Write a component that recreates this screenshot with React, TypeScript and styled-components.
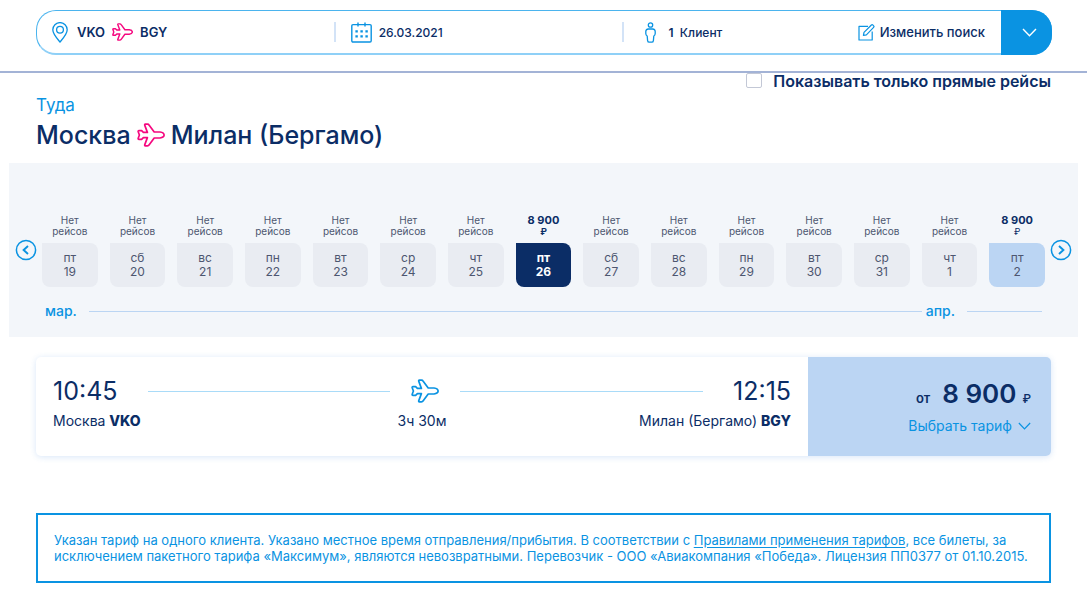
import React from "react";
import styled, { createGlobalStyle, css } from "styled-components";

const color = {
  navy: "#0b2d66",
  blue: "#0a93e2",
  sky: "#8fd0f7",
  leg: "#a9dbf8",
  pale: "#bbd5f3",
  pink: "#f5087f",
  grey: "#4d5670",
  strip: "#f3f6fa",
  cell: "#e9ecf2",
};

const GlobalStyle = createGlobalStyle`
  *, *::before, *::after { box-sizing: border-box; }
  body {
    margin: 0;
    background: #fff;
    color: ${color.navy};
    font-family: Inter, "Noto Sans", sans-serif;
    font-size: 14px;
  }
  button { font: inherit; color: inherit; background: none; border: 0; padding: 0; cursor: pointer; }
  svg { display: block; flex: none; }
  h1, p { margin: 0; }
`;

const Header = styled.header`
  padding: 10px 35px 16px 36px;
  border-bottom: 2px solid #a3b3d6;
`;

const SearchBar = styled.div`
  display: flex;
  height: 45px;
  border: 1px solid #4bb4ee;
  border-bottom: 2px solid ${color.sky};
  border-radius: 20px;
`;

const Fields = styled.div`
  flex: 1;
  display: grid;
  grid-template-columns: 299fr 289fr 214fr 163fr;
  align-items: center;
`;

const Field = styled.div<{ $divided?: boolean; $gap?: number; $inset?: number; $small?: boolean }>`
  display: flex;
  align-items: center;
  gap: ${(p) => p.$gap ?? 7}px;
  height: 20px;
  padding-left: ${(p) => p.$inset ?? 15}px;
  font-size: ${(p) => (p.$small ? 12 : 13)}px;
  font-weight: 500;
  white-space: nowrap;
  ${(p) => p.$divided && css`border-right: 2px solid #d3e3f7;`}
`;

const Code = styled.span`
  font-weight: 600;
`;

const EditButton = styled.button`
  display: flex;
  align-items: center;
  justify-content: flex-end;
  gap: 5px;
  padding-right: 16px;
  font-size: 13px;
  font-weight: 500;
  white-space: nowrap;
`;

const ExpandButton = styled.button`
  display: flex;
  align-items: center;
  justify-content: center;
  width: 51px;
  margin: -1px -1px -2px 0;
  padding-left: 6px;
  border-radius: 0 20px 20px 0;
  background: ${color.blue};
  color: #fff;
`;

const Heading = styled.section`
  display: flex;
  justify-content: space-between;
  align-items: flex-start;
  padding: 0 36px 12px;
`;

const Direction = styled.p`
  padding-top: 21px;
  font-size: 17px;
  line-height: 22px;
  color: ${color.blue};
`;

const Route = styled.h1`
  display: flex;
  align-items: center;
  gap: 6px;
  margin-top: 3px;
  font-size: 25px;
  line-height: 32px;
  font-weight: 500;
`;

const DirectOnly = styled.label`
  display: flex;
  align-items: flex-start;
  gap: 11px;
  font-size: 16px;
  line-height: 17px;
  font-weight: 600;
`;

const Checkbox = styled.input`
  appearance: none;
  width: 16px;
  height: 15px;
  margin: 0;
  border: 1px solid #c3c8d6;
  border-radius: 2px;
  background: #fff;
  &:checked { background: ${color.blue}; }
`;

const Strip = styled.section`
  margin: 0 9px;
  padding: 52px 6px 16px;
  background: ${color.strip};
`;

const DaysRow = styled.div`
  display: flex;
  align-items: flex-end;
  gap: 5px;
`;

const RoundButton = styled.button`
  display: flex;
  align-items: center;
  justify-content: center;
  width: 22px;
  height: 22px;
  margin-bottom: 26px;
  color: ${color.blue};
`;

const Days = styled.div`
  flex: 1;
  display: grid;
  grid-template-columns: repeat(15, 1fr);
  gap: 12px;
`;

type Tone = "none" | "active" | "offer";

const Day = styled.button`
  display: flex;
  flex-direction: column;
  align-items: center;
`;

const Fare = styled.span<{ $tone: Tone }>`
  display: flex;
  flex-direction: column;
  align-items: center;
  height: 28px;
  font-size: 10px;
  line-height: 11px;
  white-space: nowrap;
  color: ${(p) => (p.$tone === "none" ? color.grey : color.navy)};
  font-weight: ${(p) => (p.$tone === "active" ? 700 : 400)};
`;

const Amount = styled.b`
  font-size: 11px;
  font-weight: 700;
`;

const Ruble = styled.span`
  font-size: 9px;
`;

const DateCell = styled.span<{ $tone: Tone }>`
  display: flex;
  flex-direction: column;
  align-items: center;
  justify-content: center;
  width: 100%;
  height: 44px;
  border-radius: 0 8px 8px 8px;
  font-size: 12px;
  line-height: 14px;
  color: ${(p) => (p.$tone === "active" ? "#fff" : color.grey)};
  font-weight: ${(p) => (p.$tone === "active" ? 700 : 400)};
  background: ${(p) => ({ none: color.cell, active: color.navy, offer: color.pale })[p.$tone]};
`;

const Months = styled.div`
  display: flex;
  align-items: center;
  margin-top: 14px;
  padding: 0 30px;
  font-size: 14px;
  line-height: 20px;
  font-weight: 500;
  color: ${color.blue};
`;

const MonthLine = styled.span<{ $width?: number }>`
  flex: ${(p) => (p.$width ? `0 0 ${p.$width}px` : "1")};
  height: 1px;
  margin: 0 4px 0 12px;
  background: ${color.pale};
  &:last-child { margin-right: 0; }
`;

const Flight = styled.article`
  display: grid;
  grid-template-columns: 772fr 243fr;
  min-height: 99px;
  margin: 20px 36px 0;
  border-radius: 5px;
  box-shadow: 0 1px 6px rgba(60, 130, 220, 0.2);
`;

const Schedule = styled.div`
  padding: 17px 17px 0;
`;

const Timeline = styled.div`
  display: flex;
  align-items: center;
  gap: 21px;
`;

const Time = styled.time<{ $end?: boolean }>`
  margin: ${(p) => (p.$end ? "0 0 0 9px" : "0 9px 0 0")};
  font-size: 25px;
  line-height: 34px;
`;

const Leg = styled.span`
  flex: 1;
  height: 1px;
  background: ${color.leg};
`;

const Places = styled.div`
  display: grid;
  grid-template-columns: 1fr auto 1fr;
  padding-top: 3px;
  font-size: 14px;
  line-height: 20px;
  white-space: nowrap;
`;

const Place = styled.p<{ $end?: boolean }>`
  text-align: ${(p) => (p.$end ? "right" : "left")};
`;

const Strong = styled.b`
  font-weight: 800;
`;

const PriceBox = styled.div`
  display: flex;
  flex-direction: column;
  align-items: flex-end;
  padding: 20px 20px 0;
  border-radius: 0 5px 5px 0;
  background: ${color.pale};
`;

const Price = styled.div`
  display: flex;
  align-items: baseline;
  height: 34px;
  font-size: 13px;
  line-height: 34px;
  font-weight: 600;
`;

const Sum = styled.span`
  margin: 0 6px 0 12px;
  font-size: 26px;
`;

const Currency = styled.span`
  font-size: 12px;
  font-weight: 500;
`;

const ChooseButton = styled.button`
  display: flex;
  align-items: center;
  gap: 6px;
  margin-top: 5px;
  font-size: 14px;
  line-height: 20px;
  color: ${color.blue};
`;

const Notice = styled.p`
  && { margin: 57px 36px 13px; }
  padding: 17px 16px;
  border: 2px solid ${color.blue};
  font-size: 13px;
  line-height: 16px;
  color: ${color.blue};
`;

const RulesLink = styled.a`
  color: inherit;
  text-underline-offset: 2px;
`;

const PlaneIcon = ({ width = 28, stroke = color.pink, weight = 1.7 }: { width?: number; stroke?: string; weight?: number }) => (
  <svg width={width} height={(width * 24) / 28} viewBox="0 0 28 24" fill="none" stroke={stroke} strokeWidth={weight} strokeLinejoin="round" strokeLinecap="round" aria-hidden="true">
    <path d="M8.4 1.2 H10.4 Q11.6 1.2 12.2 2.2 L17.2 9 H23 Q27.1 9.6 27.1 12 Q27.1 14.4 23 15 H17.2 L12.2 21.8 Q11.6 22.8 10.4 22.8 H8.4 Q7.4 22.8 7.8 21.6 L10.4 14.6 H6.4 L4.6 16.4 H2 Q0.9 16.4 1.2 15.2 L2.4 12 L1.2 8.8 Q0.9 7.6 2 7.6 H4.6 L6.4 9.4 H10.4 L7.8 2.4 Q7.4 1.2 8.4 1.2 Z" />
  </svg>
);

const PinIcon = () => (
  <svg width="18" height="21" viewBox="0 0 18 21" fill="none" stroke={color.blue} strokeWidth="1.3" aria-hidden="true">
    <path d="M8 20 C5 16.4 0.8 12 0.8 7.8 A7.2 7.2 0 0 1 15.2 7.8 C15.2 12 11 16.4 8 20 Z" />
    <circle cx="8" cy="7.8" r="3.4" />
  </svg>
);

const CalendarIcon = () => (
  <svg width="21" height="21" viewBox="0 0 21 21" fill="none" stroke={color.blue} strokeWidth="1.4" aria-hidden="true">
    <rect x="0.8" y="2.6" width="19.4" height="17.4" rx="1.2" />
    <path d="M7 0.6 V4.4 M14 0.6 V4.4" />
    <path d="M4.4 9.4 H17 M4.4 14.4 H17" strokeWidth="2.4" strokeDasharray="2.4 2.6" />
  </svg>
);

const PersonIcon = () => (
  <svg width="11" height="21" viewBox="0 0 11 21" fill="none" stroke={color.blue} strokeWidth="1.3" strokeLinejoin="round" aria-hidden="true">
    <circle cx="5.5" cy="3" r="2.2" />
    <path d="M3.4 7 H7.6 Q10.2 7.2 10.2 9.6 V11.6 Q10.2 13.4 8.8 14 L8.4 18.6 Q8.2 20.2 6.8 20.2 H4.2 Q2.8 20.2 2.6 18.6 L2.2 14 Q0.8 13.4 0.8 11.6 V9.6 Q0.8 7.2 3.4 7 Z" />
  </svg>
);

const EditIcon = () => (
  <svg width="17" height="17" viewBox="0 0 17 17" fill="none" stroke={color.blue} strokeWidth="1.2" strokeLinejoin="round" aria-hidden="true">
    <path d="M10 2.4 H1 V16 H14.2 V7.4" />
    <path d="M5.4 11.4 L6 8.4 L13.4 1 Q14.2 0.4 15 1.2 L15.6 1.8 Q16.4 2.6 15.6 3.4 L8.4 10.8 Z" />
  </svg>
);

const Chevron = ({ width = 15, height = 9 }: { width?: number; height?: number }) => (
  <svg width={width} height={height} viewBox="0 0 15 9" fill="none" stroke="currentColor" strokeWidth="1.4" aria-hidden="true">
    <path d="M1 1 L7.5 7.8 L14 1" />
  </svg>
);

const CircleArrow = ({ forward }: { forward?: boolean }) => (
  <svg width="22" height="22" viewBox="0 0 22 22" fill="none" stroke="currentColor" strokeWidth="1.5" aria-hidden="true">
    <circle cx="11" cy="11" r="9.6" />
    <path d={forward ? "M9 7 L13.4 11 L9 15" : "M13 7 L8.6 11 L13 15"} strokeWidth="1.9" />
  </svg>
);

const weekdays = ["пт", "сб", "вс", "пн", "вт", "ср", "чт"];
const dates = [19, 20, 21, 22, 23, 24, 25, 26, 27, 28, 29, 30, 31, 1, 2];
const tones: Record<number, Tone> = { 26: "active", 2: "offer" };

export default function App() {
  return (
    <>
      <GlobalStyle />
      <Header>
        <SearchBar>
          <Fields>
            <Field $divided>
              <PinIcon />
              <Code>VKO</Code>
              <PlaneIcon width={21} weight={1.9} />
              <Code>BGY</Code>
            </Field>
            <Field $divided $small>
              <CalendarIcon />
              <span>26.03.2021</span>
            </Field>
            <Field $gap={12} $inset={21} $small>
              <PersonIcon />
              <span>
                <Code>1</Code>&nbsp; Клиент
              </span>
            </Field>
            <EditButton type="button">
              <EditIcon />
              Изменить поиск
            </EditButton>
          </Fields>
          <ExpandButton type="button" aria-label="Развернуть">
            <Chevron />
          </ExpandButton>
        </SearchBar>
      </Header>

      <main>
        <Heading>
          <div>
            <Direction>Туда</Direction>
            <Route>
              Москва
              <PlaneIcon />
              Милан (Бергамо)
            </Route>
          </div>
          <DirectOnly>
            <Checkbox type="checkbox" />
            Показывать только прямые рейсы
          </DirectOnly>
        </Heading>

        <Strip>
          <DaysRow>
            <RoundButton type="button" aria-label="Назад">
              <CircleArrow />
            </RoundButton>
            <Days>
              {dates.map((date, i) => {
                const tone = tones[date] ?? "none";
                return (
                  <Day type="button" key={date}>
                    <Fare $tone={tone}>
                      {tone === "none" ? (
                        <>
                          <span>Нет</span>
                          <span>рейсов</span>
                        </>
                      ) : (
                        <>
                          <Amount>8 900</Amount>
                          <Ruble>₽</Ruble>
                        </>
                      )}
                    </Fare>
                    <DateCell $tone={tone}>
                      <span>{weekdays[i % 7]}</span>
                      <span>{date}</span>
                    </DateCell>
                  </Day>
                );
              })}
            </Days>
            <RoundButton type="button" aria-label="Вперёд">
              <CircleArrow forward />
            </RoundButton>
          </DaysRow>
          <Months>
            мар.
            <MonthLine />
            апр.
            <MonthLine $width={75} />
          </Months>
        </Strip>

        <Flight>
          <Schedule>
            <Timeline>
              <Time>10:45</Time>
              <Leg />
              <PlaneIcon stroke={color.blue} />
              <Leg />
              <Time $end>12:15</Time>
            </Timeline>
            <Places>
              <Place>
                Москва <Strong>VKO</Strong>
              </Place>
              <Place>3ч 30м</Place>
              <Place $end>
                Милан (Бергамо) <Strong>BGY</Strong>
              </Place>
            </Places>
          </Schedule>
          <PriceBox>
            <Price>
              от <Sum>8 900</Sum> <Currency>₽</Currency>
            </Price>
            <ChooseButton type="button">
              Выбрать тариф
              <Chevron width={13} height={8} />
            </ChooseButton>
          </PriceBox>
        </Flight>

        <Notice>
          Указан тариф на одного клиента. Указано местное время отправления/прибытия. В соответствии с{" "}
          <RulesLink href="#rules">Правилами применения тарифов</RulesLink>, все билеты, за исключением пакетного
          тарифа «Максимум», являются невозвратными. Перевозчик - ООО «Авиакомпания «Победа». Лицензия ПП0377 от
          01.10.2015.
        </Notice>
      </main>
    </>
  );
}
